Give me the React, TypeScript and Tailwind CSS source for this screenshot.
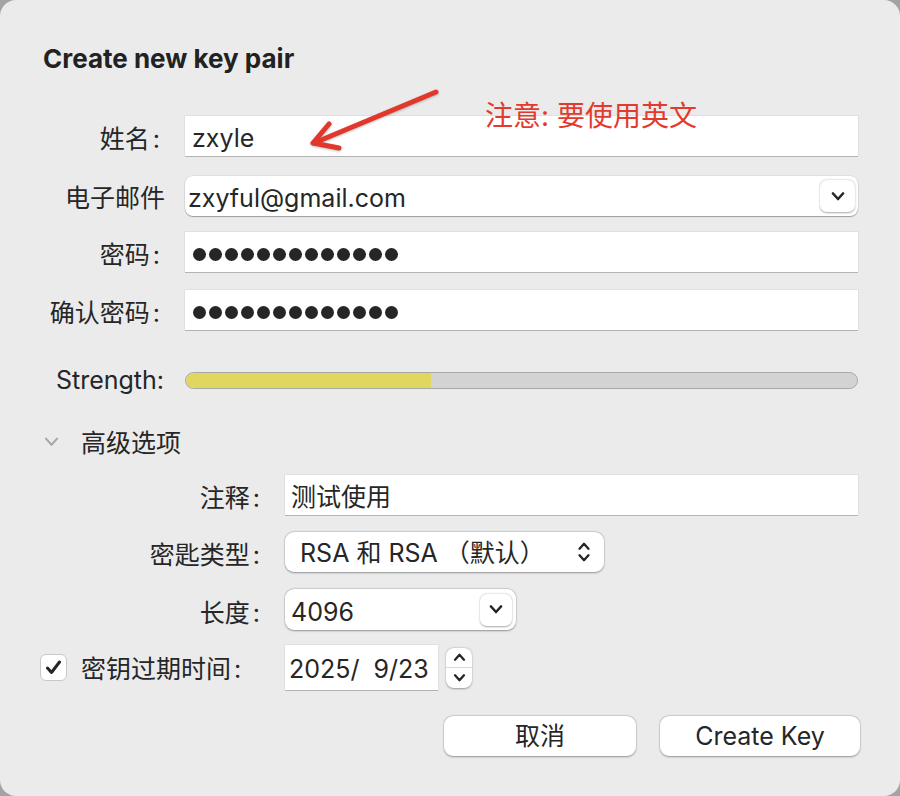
import React from "react";

const FONT = { fontFamily: 'Inter, "Noto Sans CJK SC", "Noto Sans", sans-serif' };

function Chevron({ className = "", up = false, w = 14, h = 9, stroke = "#262626", sw = 2.6 }: { className?: string; up?: boolean; w?: number; h?: number; stroke?: string; sw?: number }) {
  return (
    <svg width={w} height={h} viewBox="0 0 14 9" className={className}>
      <polyline
        points={up ? "2,7.5 7,2 12,7.5" : "2,1.5 7,7 12,1.5"}
        fill="none"
        stroke={stroke}
        strokeWidth={sw}
        strokeLinecap="round"
        strokeLinejoin="round"
      />
    </svg>
  );
}

function Dots() {
  return (
    <div className="flex items-center gap-[3px] pl-[8px] translate-y-[2px]">
      {Array.from({ length: 13 }).map((_, i) => (
        <span key={i} className="block w-[13px] h-[13px] rounded-full bg-[#262626]" />
      ))}
    </div>
  );
}

function Label({ text, w }: { text: string; w: string }) {
  return (
    <div className={`${w} text-right text-[25px] leading-[30px] whitespace-nowrap translate-y-[3px]`}>
      {text}
      <span className="ml-[3px]">:</span>
    </div>
  );
}

const field = "bg-white shadow-[0_1px_0_#b3b3b3,0_0_0_0.5px_#d6d6d6]";
const pop = "bg-white rounded-[9px] shadow-[0_0.5px_2px_rgba(0,0,0,0.35),0_0_0_0.5px_rgba(0,0,0,0.08)]";

export default function App() {
  return (
    <div className="w-[900px] h-[796px] bg-[#a3a3a3] text-[#262626]" style={FONT}>
      <div className="relative w-[900px] h-[796px] bg-[#ebebeb] rounded-[16px] flex flex-col pt-[44px]">
        <div className="h-[30px] leading-[30px] pl-[43px] text-[26px] font-bold text-[#222]">Create new key pair</div>

        {/* 姓名 */}
        <div className="flex items-center mt-[42px] h-[40px]">
          <Label text="姓名" w="w-[160px]" />
          <div className={`ml-[25px] w-[673px] h-[40px] flex items-center pl-[7px] text-[25px] ${field}`}>
            <span className="translate-y-[3px]">zxyle</span>
          </div>
        </div>

        {/* 电子邮件 */}
        <div className="flex items-center mt-[20px] h-[40px]">
          <div className="w-[165px] text-right text-[25px] whitespace-nowrap translate-y-[3px]">电子邮件</div>
          <div className={`ml-[20px] w-[673px] h-[40px] flex items-center justify-between pl-[3px] pr-[3px] text-[25px] bg-white rounded-[8px] shadow-[0_1px_1px_rgba(0,0,0,0.3),0_0_0_0.5px_rgba(0,0,0,0.1)]`}>
            <span className="translate-y-[3px]">zxyful@gmail.com</span>
            <div className="w-[35px] h-[32px] flex items-center justify-center bg-white rounded-[7px] shadow-[0_0.5px_2px_rgba(0,0,0,0.35)]">
              <Chevron />
            </div>
          </div>
        </div>

        {/* 密码 */}
        <div className="flex items-center mt-[16px] h-[40px]">
          <Label text="密码" w="w-[160px]" />
          <div className={`ml-[25px] w-[673px] h-[40px] flex items-center ${field}`}>
            <Dots />
          </div>
        </div>

        {/* 确认密码 */}
        <div className="flex items-center mt-[18px] h-[40px]">
          <Label text="确认密码" w="w-[160px]" />
          <div className={`ml-[25px] w-[673px] h-[40px] flex items-center ${field}`}>
            <Dots />
          </div>
        </div>

        {/* Strength */}
        <div className="flex items-center mt-[42px] h-[16px]">
          <div className="w-[164px] text-right text-[25px] leading-[16px]">Strength:</div>
          <div className="ml-[21px] w-[673px] h-[17px] rounded-full bg-[#d3d3d3] border border-[#a8a8a8] overflow-hidden flex">
            <div className="w-[245px] h-full bg-[#e0d660] rounded-l-full" />
          </div>
        </div>

        {/* 高级选项 */}
        <div className="flex items-center mt-[39px] h-[30px]">
          <div className="w-[81px] pl-[43px] flex items-center">
            <Chevron w={17} h={10} stroke="#a6a6a6" sw={1.8} />
          </div>
          <div className="text-[25px] translate-y-[2px]">高级选项</div>
        </div>

        {/* 注释 */}
        <div className="flex items-center mt-[18px] h-[40px]">
          <Label text="注释" w="w-[260px]" />
          <div className={`ml-[25px] w-[573px] h-[40px] flex items-center pl-[6px] text-[25px] ${field}`}>
            <span className="translate-y-[3px]">测试使用</span>
          </div>
        </div>

        {/* 密匙类型 */}
        <div className="flex items-center mt-[17px] h-[40px]">
          <Label text="密匙类型" w="w-[260px]" />
          <div className={`ml-[25px] w-[319px] h-[40px] flex items-center justify-between pl-[15px] pr-[13px] text-[25px] ${pop}`}>
            <span className="whitespace-nowrap translate-y-[2px]">RSA 和 RSA （默认）</span>
            <div className="flex flex-col items-center gap-[4px]">
              <Chevron up w={14} h={8} />
              <Chevron w={14} h={8} />
            </div>
          </div>
        </div>

        {/* 长度 */}
        <div className="flex items-center mt-[17px] h-[41px]">
          <Label text="长度" w="w-[260px]" />
          <div className={`ml-[25px] w-[231px] h-[41px] flex items-center justify-between pl-[6px] pr-[4px] text-[25px] ${pop}`}>
            <span className="translate-y-[3px]">4096</span>
            <div className="w-[32px] h-[32px] flex items-center justify-center bg-white rounded-[7px] shadow-[0_0.5px_2px_rgba(0,0,0,0.35)]">
              <Chevron />
            </div>
          </div>
        </div>

        {/* 密钥过期时间 */}
        <div className="flex items-center mt-[15px] h-[45px]">
          <div className="ml-[40px] w-[27px] h-[27px] rounded-[6px] bg-white border border-[#c8c8c8] flex items-center justify-center">
            <svg width="17" height="15" viewBox="0 0 17 15">
              <polyline points="2.5,8 6.5,12.5 14.5,2" fill="none" stroke="#262626" strokeWidth="3" strokeLinecap="round" strokeLinejoin="round" />
            </svg>
          </div>
          <div className="ml-[14px] w-[204px] text-[25px] whitespace-nowrap translate-y-[2px]">
            密钥过期时间<span className="ml-[3px]">:</span>
          </div>
          <div className={`w-[153px] h-[45px] flex items-center pl-[4px] text-[25px] whitespace-pre overflow-hidden ${field}`}>
            <span className="translate-y-[2px]">2025/  9/23</span>
          </div>
          <div className={`ml-[8px] w-[26px] h-[40px] flex flex-col rounded-[8px] bg-white shadow-[0_0.5px_2px_rgba(0,0,0,0.35)]`}>
            <div className="flex-1 flex items-center justify-center border-b border-[#d8d8d8]">
              <Chevron up w={13} h={8} />
            </div>
            <div className="flex-1 flex items-center justify-center">
              <Chevron w={13} h={8} />
            </div>
          </div>
        </div>

        {/* Buttons */}
        <div className="flex mt-[26px] h-[40px] pl-[444px] gap-[24px]">
          <div className={`w-[192px] h-[40px] flex items-center justify-center text-[25px] ${pop}`}>
            <span className="translate-y-[1px]">取消</span>
          </div>
          <div className={`w-[200px] h-[40px] flex items-center justify-center text-[25px] ${pop}`}>
            <span className="translate-y-[1px]">Create Key</span>
          </div>
        </div>

        {/* Annotation */}
        <div className="absolute left-[485px] top-[97px] text-[28px] leading-[38px] text-[#e23a2e] whitespace-nowrap">注意: 要使用英文</div>
        <svg className="absolute left-0 top-0" width="900" height="796" viewBox="0 0 900 796" style={{ pointerEvents: "none" }}>
          <g fill="none" stroke="#e2382c" strokeWidth="5" strokeLinecap="round" strokeLinejoin="round" style={{ filter: "drop-shadow(0 1px 1px rgba(0,0,0,0.25))" }}>
            <line x1="436" y1="92" x2="314" y2="143" />
            <polyline points="329,124 313,143 339,148" />
          </g>
        </svg>
      </div>
    </div>
  );
}
